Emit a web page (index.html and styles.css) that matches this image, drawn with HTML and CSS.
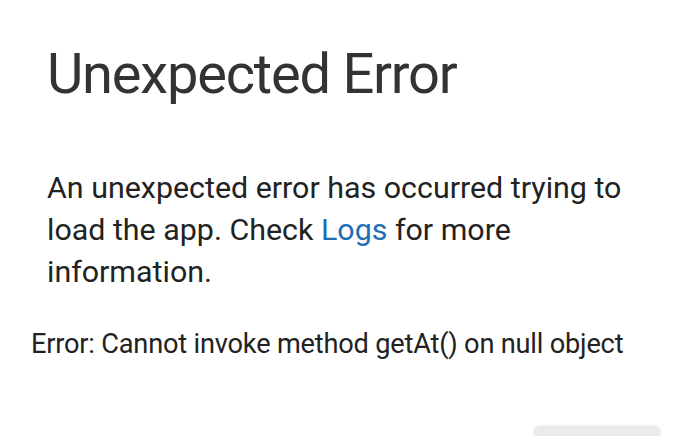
FILE: index.html
```html
<!DOCTYPE html>
<html>
<head>
<meta charset="utf-8">
<link rel="stylesheet" href="styles.css">
</head>
<body>
<div class="page">
  <section class="card">
    <h1 class="title">Unexpected Error</h1>
    <p class="message">An unexpected error has occurred trying to load the app. Check <a class="link" href="#">Logs</a> for more information.</p>
  </section>
  <p class="detail">Error: Cannot invoke method getAt() on null object</p>
  <div class="actions">
    <button class="btn" type="button"></button>
  </div>
</div>
</body>
</html>
```
FILE: styles.css
```css
html, body {
  margin: 0;
  padding: 0;
  background: #ffffff;
  overflow: hidden;
}
body {
  font-family: Roboto, "Noto Sans", sans-serif;
  color: #212121;
}
.page {
  width: 690px;
  height: 436px;
  display: flex;
  flex-direction: column;
}
.card {
  padding: 0 50px 0 47px;
}
.title {
  margin: 38px 0 0;
  font-size: 56px;
  font-weight: 400;
  line-height: 72px;
  color: #333333;
  letter-spacing: -1.2px;
}
.message {
  margin: 57px 0 0;
  font-size: 30.4px;
  line-height: 42px;
  color: #222222;
  letter-spacing: 0;
}
.link {
  color: #1f6db3;
  text-decoration: none;
}
.detail {
  margin: 33px 0 0 31px;
  font-size: 27.2px;
  line-height: 36px;
  color: #222222;
  letter-spacing: -0.2px;
}
.actions {
  display: flex;
  justify-content: flex-end;
  padding-right: 30px;
  margin-top: auto;
}
.btn {
  width: 126px;
  height: 10px;
  border: none;
  border-radius: 6px 6px 0 0;
  background: #ebebeb;
  box-shadow: 0 0 3px rgba(0,0,0,0.12);
}
```
